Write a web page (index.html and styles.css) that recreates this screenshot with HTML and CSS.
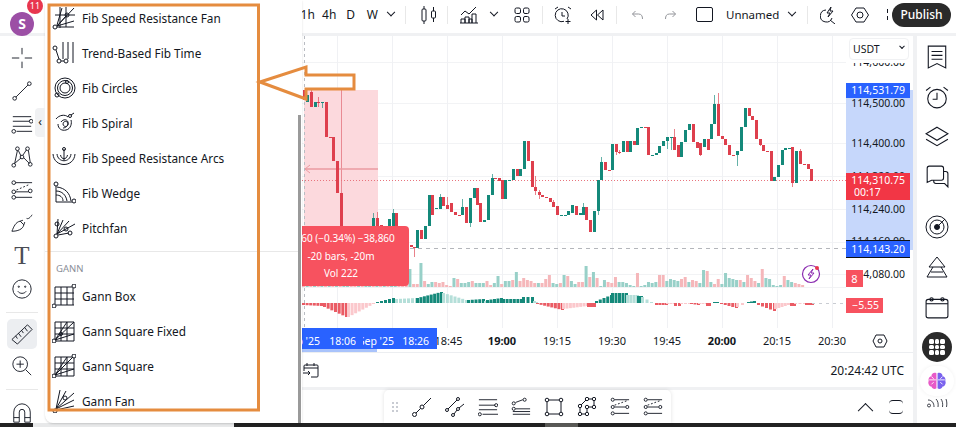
FILE: index.html
```html
<!DOCTYPE html>
<html lang="en">
<head>
    <meta charset="UTF-8">
    <meta name="viewport" content="width=device-width, initial-scale=1.0">
    <title>Unnamed - Chart</title>
    <link rel="stylesheet" href="styles.css">
</head>
<body>
    <svg class="sprites" xmlns="http://www.w3.org/2000/svg">
        <symbol id="i-cross" viewBox="0 0 24 24"><path d="M1 12h8M15 12h8M12 1v7M12 16v7"/></symbol>
        <symbol id="i-line" viewBox="0 0 24 24"><circle cx="4" cy="20" r="2"/><circle cx="20" cy="4" r="2"/><path d="M5.5 18.5l13-13"/></symbol>
        <symbol id="i-fib" viewBox="0 0 24 24"><path d="M2 4h20M2 9h18M6 20h17M2 14.500h20"/><circle cx="22" cy="9" r="2"/><circle cx="3" cy="20" r="2"/></symbol>
        <symbol id="i-pattern" viewBox="0 0 24 24"><circle cx="3" cy="21" r="2"/><circle cx="7" cy="3" r="2"/><circle cx="12" cy="12" r="2"/><circle cx="18" cy="3" r="2"/><circle cx="21" cy="20" r="2"/><path d="M4 19L7 5M4 19l7-6M8 5l3 6M13 10l4-6M19 5l2 13M14 13l6 6"/></symbol>
        <symbol id="i-forecast" viewBox="0 0 24 24"><circle cx="3" cy="4" r="2"/><circle cx="3" cy="14" r="2"/><circle cx="3" cy="20" r="2"/><circle cx="21" cy="13" r="2"/><path d="M5 4h18M5 20h18M5 14h14"/><path stroke-dasharray="2 2" d="M6 12l14-6"/></symbol>
        <symbol id="i-brush" viewBox="0 0 24 24"><path d="M1 21c2-5 4-10 9-11l4 4c-1 5-7 7-13 7zM10 10l3-1M14 14l1-3M17 7c2 1 4-1 6-4"/></symbol>
        <symbol id="i-smile" viewBox="0 0 24 24"><circle cx="12" cy="12" r="10"/><circle cx="8.500" cy="9.500" r=".7"/><circle cx="15.500" cy="9.500" r=".7"/><path d="M7.500 14.500c2 3 7 3 9 0"/></symbol>
        <symbol id="i-ruler" viewBox="0 0 24 24"><path d="M1 18L18 2l5 5L7 23zM5 14l2 3M8 11l3 4M11.500 8l2 3M15 5l3 4"/></symbol>
        <symbol id="i-zoom" viewBox="0 0 24 24"><circle cx="10" cy="10" r="8"/><path d="M10 6v8M6 10h8M16 16l6 6"/></symbol>
        <symbol id="i-magnet" viewBox="0 0 24 24"><path d="M3 22V11a9 9 0 0 1 18 0v11h-6V11a3 3 0 0 0-6 0v11zM3 17h6M15 17h6"/></symbol>

        <symbol id="m-fan" viewBox="0 0 24 24"><circle cx="3" cy="21" r="2"/><circle cx="15" cy="9" r="2"/><path d="M5 20L22 2M5 20l9-10M5 20l17-5M5 21h17M5 19L10 2M8 1v21M14 1v20M3 9h20"/></symbol>
        <symbol id="m-time" viewBox="0 0 24 24"><circle cx="3" cy="7" r="2"/><circle cx="7" cy="20" r="2"/><circle cx="14" cy="20" r="2"/><path d="M4 9l3 9M9 20h3M11 1v17M16 1v17M21 1v21"/></symbol>
        <symbol id="m-circles" viewBox="0 0 24 24"><circle cx="13" cy="12" r="10"/><circle cx="13" cy="12" r="7.500"/><circle cx="13" cy="12" r="5"/><circle cx="5" cy="19" r="2"/><circle cx="15" cy="6" r="1.500"/></symbol>
        <symbol id="m-spiral" viewBox="0 0 24 24"><path d="M4 8c3-4 9-5 12-2M6 13c0 5 4 7 8 6 5-1 6-7 5-10M11 13a2.500 2.500 0 1 0 0-.1M9 11c2-3 6-3 7 0 1 4-3 6-5 6"/><circle cx="18" cy="5" r="1.500"/><path d="M19 4l3-2"/></symbol>
        <symbol id="m-arcs" viewBox="0 0 24 24"><path d="M1 8c1 14 21 14 22 0M5 8c1 9 13 9 14 0M8.500 9c1 5 6 5 7 0M12 3v11"/><circle cx="12" cy="3" r="1.500"/></symbol>
        <symbol id="m-wedge" viewBox="0 0 24 24"><circle cx="4" cy="3" r="2"/><circle cx="22" cy="20" r="2"/><path d="M4 5v16h16M5 6c8 1 13 6 14 14M4 10c6 0 10 4 11 10M4 14c4 0 7 2 7 6"/></symbol>
        <symbol id="m-pitch" viewBox="0 0 24 24"><circle cx="4" cy="20" r="2"/><circle cx="5" cy="8" r="2"/><circle cx="14" cy="13" r="2"/><circle cx="18" cy="17" r="2"/><path d="M5 18l1-15M5 18l6-14M5 18L17 5M5 18L23 8M6 19l11-2"/></symbol>
        <symbol id="m-box" viewBox="0 0 24 24"><circle cx="2" cy="22" r="2"/><circle cx="22" cy="2" r="2"/><path d="M3 3h17M3 9h19M3 15h19M4 21h18M3 3v17M9 3v18M15 3v18M21 4v17"/></symbol>
        <symbol id="m-square" viewBox="0 0 24 24"><circle cx="2" cy="22" r="2"/><circle cx="9" cy="15" r="1.500"/><path d="M3 3h19v19H4M3 3v17M3 9h19M3 15h19M9 3v19M15 3v19M3 21L22 3M3 21L15 3M3 21L22 15"/></symbol>
        <symbol id="m-square-dot" viewBox="0 0 24 24"><circle cx="2" cy="22" r="2"/><circle cx="22" cy="2" r="2"/><path d="M3 3h17M22 4v18H4M3 3v17M3 9h19M3 15h19M9 3v19M15 3v19M3 21L21 3M3 21L15 3M3 21L22 15"/></symbol>
        <symbol id="m-gannfan" viewBox="0 0 24 24"><circle cx="3" cy="22" r="2"/><circle cx="13" cy="9" r="2"/><path d="M4 20L8 1M4 20L14 2M4 20L22 4M4 20l18-9M4 21l18-4"/></symbol>

        <symbol id="t-candles" viewBox="0 0 16 18"><rect x="1" y="3" width="4" height="12" rx="1"/><rect x="10.500" y="5" width="4" height="7" rx="1"/><path d="M3 0v3M3 15v3M12.500 1v4M12.500 12v4"/></symbol>
        <symbol id="t-indicator" viewBox="0 0 18 18"><path d="M1 9l4-4 4 3 7-7M1 17v-4h4v4M5 17v-6h4v6M9 17v-4h3v4M12 17V8h4v9M0 17h18"/></symbol>
        <symbol id="t-layout" viewBox="0 0 16 16"><rect x="1" y="1" width="5.500" height="5.500" rx="1.500"/><rect x="9.500" y="1" width="5.500" height="5.500" rx="1.500"/><rect x="1" y="9.500" width="5.500" height="5.500" rx="1.500"/><rect x="9.500" y="9.500" width="5.500" height="5.500" rx="1.500"/></symbol>
        <symbol id="t-alarm" viewBox="0 0 18 18"><path d="M13 13a6.500 6.500 0 1 0-3 2.300M8 6v4h3M1 3l3-2M17 3l-3-2M14 13v5M11.500 15.500h5"/></symbol>
        <symbol id="t-rewind" viewBox="0 0 14 12"><path d="M6.500 1L1 6l5.500 5zM13 1L7.500 6l5.500 5z"/></symbol>
        <symbol id="t-undo" viewBox="0 0 12 10"><path d="M4 1L1 4l3 3M1 4h6c3 0 4 2 4 5"/></symbol>
        <symbol id="t-redo" viewBox="0 0 12 10"><path d="M8 1l3 3-3 3M11 4H5C2 4 1 6 1 9"/></symbol>
        <symbol id="t-search" viewBox="0 0 16 18"><path d="M6 4a6 6 0 1 0 6 8M10 14l5 4M11 1L7 7h3L8 11l5-6h-3z"/></symbol>
        <symbol id="t-hex" viewBox="0 0 18 16"><path d="M5 1h8l4.500 7-4.500 7H5L.5 8z"/><circle cx="9" cy="8" r="3"/></symbol>

        <symbol id="r-list" viewBox="0 0 20 22"><path d="M2 1h16v20l-8-4-8 4zM5 6h10M5 9.500h10M5 13h10"/></symbol>
        <symbol id="r-alarm" viewBox="0 0 22 22"><circle cx="11" cy="12.500" r="8.500"/><path d="M11 7v6H7M1 5l4-3M21 5l-4-3"/></symbol>
        <symbol id="r-layers" viewBox="0 0 22 20"><path d="M11 1l10 6-10 6L1 7zM1 12l10 6 10-6"/></symbol>
        <symbol id="r-chat" viewBox="0 0 22 22"><path d="M4 1h11a2 2 0 0 1 2 2v9a2 2 0 0 1-2 2H6l-4 2V3a2 2 0 0 1 2-2zM17 6h2a2 2 0 0 1 2 2v12l-3-3H10a2 2 0 0 1-2-2v-1"/></symbol>
        <symbol id="r-target" viewBox="0 0 24 24"><circle cx="12" cy="12" r="11"/><circle cx="12" cy="12" r="7"/><circle cx="12" cy="12" r="2.500" fill="#131722"/><path d="M12 12l8-8"/></symbol>
        <symbol id="r-peaks" viewBox="0 0 24 22"><path d="M12 1l8 10H4zM8 11l-6 10h20l-6-10M6 16h12"/></symbol>
        <symbol id="r-calendar" viewBox="0 0 22 22"><rect x="1" y="4" width="20" height="17" rx="2"/><path d="M1 8h20"/><circle cx="6" cy="4" r="1.500"/><circle cx="16" cy="4" r="1.500"/></symbol>

        <symbol id="d-ray" viewBox="0 0 20 20"><circle cx="2.500" cy="17.500" r="2"/><circle cx="10" cy="10" r="2"/><path d="M4 16l4.500-4.500M11.500 8.500L19 1"/></symbol>
        <symbol id="d-parallel" viewBox="0 0 20 20"><circle cx="2" cy="13" r="1.500"/><circle cx="13" cy="2" r="1.500"/><circle cx="8" cy="18" r="1.500"/><circle cx="13" cy="12" r="1.500"/><path d="M3 12l9-9M9 17l3-4M14 11l5-4"/></symbol>
        <symbol id="d-levels" viewBox="0 0 22 20"><path d="M1 2h20M1 8h18M5 18h17M1 13h20" /><circle cx="20" cy="8" r="1.700"/><circle cx="2" cy="18" r="1.700"/></symbol>
        <symbol id="d-fan" viewBox="0 0 22 20"><circle cx="3" cy="6" r="1.700"/><circle cx="3" cy="12" r="1.700"/><circle cx="15" cy="2" r="1.700"/><path d="M5 5l8-3M5 12h16M2 15h19M2 18h19"/></symbol>
        <symbol id="d-rect" viewBox="0 0 20 20"><circle cx="3" cy="3" r="1.800"/><circle cx="17" cy="3" r="1.800"/><circle cx="3" cy="17" r="1.800"/><circle cx="17" cy="17" r="1.800"/><path d="M5 3h10M5 17h10M3 5v10M17 5v10"/></symbol>
        <symbol id="d-path" viewBox="0 0 20 20"><circle cx="3" cy="9" r="1.700"/><circle cx="3" cy="17" r="1.700"/><circle cx="10" cy="2" r="1.700"/><circle cx="17" cy="2" r="1.700"/><circle cx="10" cy="10" r="1.700"/><circle cx="17" cy="10" r="1.700"/><circle cx="10" cy="17" r="1.700"/><path d="M4 8l5-5M12 2h3M12 10h3M17 4v4M10 12v3M5 17h3M3 11v4"/></symbol>
        <symbol id="d-forecast" viewBox="0 0 22 20"><circle cx="3" cy="2" r="1.700"/><circle cx="3" cy="10" r="1.700"/><circle cx="3" cy="17" r="1.700"/><circle cx="19" cy="10" r="1.700"/><path d="M5 2h16M5 17h16M5 10h12"/><path stroke-dasharray="2 2" d="M5 8l14-5"/></symbol>
    </svg>

    <header class="topbar">
        <div class="avatar">S<span class="avatar-badge">11</span></div>
        <div class="toolbar">
            <span class="tf">1h</span>
            <span class="tf">4h</span>
            <span class="tf">D</span>
            <span class="tf">W</span>
            <span class="chev chev-tf"></span>
            <span class="tool-sep sep-a"></span>
            <svg class="ico ico-candles"><use href="#t-candles"/></svg>
            <span class="tool-sep sep-b"></span>
            <svg class="ico ico-ind"><use href="#t-indicator"/></svg>
            <span class="chev chev-ind"></span>
            <svg class="ico ico-layout"><use href="#t-layout"/></svg>
            <span class="tool-sep sep-c"></span>
            <svg class="ico ico-alarm"><use href="#t-alarm"/></svg>
            <svg class="ico ico-rewind"><use href="#t-rewind"/></svg>
            <span class="tool-sep sep-d"></span>
            <svg class="ico ico-undo"><use href="#t-undo"/></svg>
            <svg class="ico ico-redo"><use href="#t-redo"/></svg>
            <span class="layout-box"></span>
            <span class="layout-name">Unnamed</span>
            <span class="chev chev-name"></span>
            <span class="tool-sep sep-e"></span>
            <svg class="ico ico-search"><use href="#t-search"/></svg>
            <svg class="ico ico-hex"><use href="#t-hex"/></svg>
            <span class="kebab"></span>
            <button class="publish">Publish</button>
        </div>
    </header>

    <main class="workspace">
        <nav class="leftbar">
            <div class="rail-btn"><svg class="ico-22"><use href="#i-cross"/></svg></div>
            <div class="rail-btn"><svg class="ico-22"><use href="#i-line"/></svg></div>
            <div class="rail-btn"><svg class="ico-22"><use href="#i-fib"/></svg></div>
            <div class="rail-btn"><svg class="ico-22"><use href="#i-pattern"/></svg></div>
            <div class="rail-btn"><svg class="ico-22"><use href="#i-forecast"/></svg></div>
            <div class="rail-btn"><svg class="ico-22"><use href="#i-brush"/></svg></div>
            <div class="rail-btn rail-text">T</div>
            <div class="rail-btn"><svg class="ico-22"><use href="#i-smile"/></svg></div>
            <div class="rail-sep"></div>
            <div class="rail-btn rail-active"><svg class="ico-22"><use href="#i-ruler"/></svg></div>
            <div class="rail-btn"><svg class="ico-22"><use href="#i-zoom"/></svg></div>
            <div class="rail-sep"></div>
            <div class="rail-btn"><svg class="ico-22"><use href="#i-magnet"/></svg></div>
        </nav>

        <section class="center">
            <div class="chart-card">
                <svg id="chart" class="chart" viewBox="45 36 868 316" xmlns="http://www.w3.org/2000/svg"></svg>
                <div class="currency">USDT<span class="chev chev-small"></span></div>
            </div>
            <div class="date-row">
                <svg class="ico-cal" viewBox="0 0 16 16"><path d="M4 3h10a1 1 0 0 1 1 1v10a1 1 0 0 1-1 1H8M1 9V4a1 1 0 0 1 1-1h2M4 1v3M11 1v3M1 6h14M0 11h7M5 9l2 2-2 2"/></svg>
                <span class="clock">20:24:42 UTC</span>
            </div>
            <div class="drawbar">
                <div class="draw-card">
                    <span class="grip"></span>
                    <svg class="draw-ico"><use href="#d-ray"/></svg>
                    <svg class="draw-ico"><use href="#d-parallel"/></svg>
                    <svg class="draw-ico"><use href="#d-levels"/></svg>
                    <svg class="draw-ico"><use href="#d-fan"/></svg>
                    <svg class="draw-ico"><use href="#d-rect"/></svg>
                    <svg class="draw-ico"><use href="#d-path"/></svg>
                    <svg class="draw-ico"><use href="#d-forecast"/></svg>
                    <svg class="draw-ico"><use href="#d-forecast"/></svg>
                </div>
                <span class="chev chev-up"></span>
                <span class="frame-btn"></span>
            </div>
        </section>

        <aside class="rightbar">
            <div class="side-btn"><svg class="ico-side"><use href="#r-list"/></svg></div>
            <div class="side-btn"><svg class="ico-side"><use href="#r-alarm"/></svg></div>
            <div class="side-btn"><svg class="ico-side"><use href="#r-layers"/></svg></div>
            <div class="side-btn"><svg class="ico-side"><use href="#r-chat"/></svg></div>
            <div class="side-btn side-gap"><svg class="ico-side"><use href="#r-target"/></svg></div>
            <div class="side-btn"><svg class="ico-side"><use href="#r-peaks"/></svg></div>
            <div class="side-btn"><svg class="ico-side"><use href="#r-calendar"/></svg></div>
            <div class="apps"><span></span><span></span><span></span><span></span><span></span><span></span><span></span><span></span><span></span></div>
            <div class="brain-pill">
                <svg viewBox="0 0 18 18" class="brain">
                    <path fill="#e85ac8" d="M8.500 2C6 1 4 2.500 4 4.500 2 5 1 7 1.500 9 .5 11 2 14 4 14c.5 2 3 3 4.500 1.500z"/>
                    <path fill="#7a62ee" d="M9.500 2c2.500-1 4.500.5 4.500 2.500 2 .5 3 2.500 2.500 4.500 1 2-.5 5-2.500 5-.5 2-3 3-4.500 1.500z"/>
                    <path fill="none" stroke="#fff" stroke-width=".8" d="M2 8h6M4 5l2 2M4 12l2-2M10 8h6M14 5l-2 2M14 12l-2-2"/>
                </svg>
            </div>
            <svg class="signal" viewBox="0 0 22 10"><circle cx="3" cy="7.500" r="1.500"/><path d="M2 2c4 0 6 3 6 7M10 1c2 2 2.500 5 2 8M15 1c1.500 2 2 5 1.500 8M20 1c1 3 1 5 .5 8"/></svg>
        </aside>
    </main>

    <div class="taskbar"><span class="task-light"></span><span class="task-grey"></span></div>

    <!-- drawing tools flyout, lies over the chart -->
    <div class="flyout">
        <div class="fly-row"><svg class="fly-ico"><use href="#m-fan"/></svg>Fib Speed Resistance Fan</div>
        <div class="fly-row"><svg class="fly-ico"><use href="#m-time"/></svg>Trend-Based Fib Time</div>
        <div class="fly-row"><svg class="fly-ico"><use href="#m-circles"/></svg>Fib Circles</div>
        <div class="fly-row"><svg class="fly-ico"><use href="#m-spiral"/></svg>Fib Spiral</div>
        <div class="fly-row"><svg class="fly-ico"><use href="#m-arcs"/></svg>Fib Speed Resistance Arcs</div>
        <div class="fly-row"><svg class="fly-ico"><use href="#m-wedge"/></svg>Fib Wedge</div>
        <div class="fly-row"><svg class="fly-ico"><use href="#m-pitch"/></svg>Pitchfan</div>
        <div class="fly-sep"></div>
        <div class="fly-head">GANN</div>
        <div class="fly-row"><svg class="fly-ico"><use href="#m-box"/></svg>Gann Box</div>
        <div class="fly-row"><svg class="fly-ico"><use href="#m-square"/></svg>Gann Square Fixed</div>
        <div class="fly-row"><svg class="fly-ico"><use href="#m-square-dot"/></svg>Gann Square</div>
        <div class="fly-row"><svg class="fly-ico"><use href="#m-gannfan"/></svg>Gann Fan</div>
        <span class="fly-scroll"></span>
    </div>
    <span class="collapse">‹</span>

    <!-- orange annotation drawn on top of the screenshot -->
    <svg class="annotation" viewBox="0 0 956 427" xmlns="http://www.w3.org/2000/svg">
        <rect x="49" y="5" width="209.500" height="405"/>
        <path d="M260 82L306 67V75H354V89H306V99Z"/>
    </svg>

    <script src="chart.js"></script>
</body>
</html>
```

FILE: styles.css
```css
* {
    margin: 0;
    padding: 0;
    box-sizing: border-box;
}

html, body {
    height: 100%;
}

body {
    width: 956px;
    height: 427px;
    display: flex;
    flex-direction: column;
    position: relative;
    overflow: hidden;
    background: #f0f1f3;
    color: #131722;
    font-family: "Noto Sans", sans-serif;
}

svg use {
    fill: none;
    stroke: #131722;
    stroke-width: 1;
}

.sprites {
    display: none;
}

/* Top bar */
.topbar {
    height: 33px;
    flex: none;
    background: #fff;
    display: flex;
}

.avatar {
    width: 24px;
    height: 24px;
    margin: 12px 0 0 10px;
    border-radius: 50%;
    background: #9c4fa5;
    color: #fff;
    font-size: 14px;
    font-weight: 700;
    line-height: 24px;
    text-align: center;
    position: relative;
}

.avatar-badge {
    position: absolute;
    top: -14px;
    left: 17px;
    width: 16px;
    height: 16px;
    border-radius: 50%;
    background: #e8364f;
    font-size: 9px;
    font-weight: 400;
    line-height: 16px;
}

.toolbar {
    margin-left: 263px;
    flex: 1;
    height: 29px;
    display: flex;
    align-items: center;
}

.tf {
    width: 21.5px;
    flex: none;
    font-size: 12px;
    text-align: center;
}

.chev {
    width: 6px;
    height: 6px;
    border-right: 1px solid #131722;
    border-bottom: 1px solid #131722;
    transform: rotate(45deg) translate(-2px, -2px);
    flex: none;
}

.tool-sep {
    width: 1px;
    height: 18px;
    background: #e8e8e8;
    flex: none;
}

.ico {
    flex: none;
}

.chev-tf { margin-left: 5px; }
.sep-a { margin-left: 11px; }
.ico-candles { width: 16px; height: 18px; margin-left: 15px; }
.sep-b { margin-left: 10px; }
.ico-ind { width: 18px; height: 18px; margin-left: 12px; }
.chev-ind { margin-left: 13px; }
.ico-layout { width: 16px; height: 16px; margin-left: 17px; }
.sep-c { margin-left: 12px; }
.ico-alarm { width: 18px; height: 18px; margin-left: 11px; }
.ico-rewind { width: 14px; height: 12px; margin-left: 18px; }
.sep-d { margin-left: 12px; }
.ico-undo { width: 13px; height: 10px; margin-left: 14px; opacity: .45; }
.ico-redo { width: 13px; height: 10px; margin-left: 20px; opacity: .45; }

.layout-box {
    width: 17px;
    height: 15px;
    margin-left: 19px;
    border: 1px solid #131722;
    border-radius: 2px;
    flex: none;
}

.layout-name {
    font-size: 11.5px;
    margin-left: 13px;
    width: 52px;
    flex: none;
}

.chev-name { margin-left: 11px; }
.sep-e { margin-left: 12px; }
.ico-search { width: 16px; height: 18px; margin-left: 12px; }
.ico-hex { width: 18px; height: 16px; margin-left: 15px; }

.kebab {
    width: 1px;
    height: 12px;
    margin-left: 18px;
    flex: none;
    background: repeating-linear-gradient(#131722 0 4px, transparent 4px 7px);
}

.publish {
    width: 59px;
    height: 24px;
    margin-left: 4px;
    border: none;
    border-radius: 12px;
    background: #2a2a2a;
    color: #fff;
    font-family: inherit;
    font-size: 12px;
    font-weight: 500;
    flex: none;
}

/* Main area */
.workspace {
    flex: 1;
    min-height: 0;
    display: flex;
    padding-top: 3px;
}

.leftbar {
    width: 45px;
    flex: none;
    background: #fff;
    padding: 5px 1px 0 0;
    display: flex;
    flex-direction: column;
    align-items: center;
    overflow: hidden;
}

.rail-btn {
    width: 30px;
    height: 33px;
    flex: none;
    display: flex;
    align-items: center;
    justify-content: center;
}

.ico-22 {
    width: 22px;
    height: 22px;
}

.rail-text {
    font-family: "Liberation Serif", serif;
    font-size: 25px;
    font-weight: 400;
    color: #4a4d55;
}

.rail-sep {
    width: 32px;
    height: 1px;
    background: #e8e8e8;
    margin: 7px 0 6px;
    flex: none;
}

.rail-active {
    height: 30px;
    background: #eceef1;
    border-radius: 5px;
}

.center {
    width: 868px;
    flex: none;
    display: flex;
    flex-direction: column;
}

.chart-card {
    height: 316px;
    flex: none;
    background: #fff;
    position: relative;
}

.chart {
    display: block;
    width: 868px;
    height: 316px;
}

.currency {
    position: absolute;
    top: 2px;
    left: 804px;
    width: 60px;
    height: 22px;
    padding-left: 3px;
    background: #fff;
    border: 1px solid #f0f1f3;
    border-radius: 4px;
    font-size: 10.5px;
    line-height: 20px;
    display: flex;
    align-items: center;
    justify-content: space-between;
}

.chev-small {
    width: 4px;
    height: 4px;
    margin-right: 4px;
}

.date-row {
    height: 35px;
    flex: none;
    background: #fff;
    border-top: 1px solid #eceef1;
    display: flex;
    align-items: center;
    justify-content: space-between;
    padding: 0 9px 0 258px;
}

.ico-cal {
    width: 16px;
    height: 16px;
    fill: none;
    stroke: #131722;
    stroke-width: 1;
}

.clock {
    font-size: 12px;
}

.drawbar {
    height: 33px;
    margin-top: 3px;
    flex: none;
    background: #fff;
    display: flex;
    align-items: center;
    position: relative;
}

.draw-card {
    margin-left: 339px;
    width: 287px;
    height: 33px;
    border-radius: 5px 5px 0 0;
    box-shadow: 0 0 4px rgba(0, 0, 0, .12);
    display: flex;
    align-items: center;
    padding-left: 7px;
}

.grip {
    width: 7px;
    height: 11px;
    margin-right: 14px;
    background-image: radial-gradient(#c9ccd3 1px, transparent 1.2px);
    background-size: 4px 4px;
    flex: none;
}

.draw-ico {
    width: 20px;
    height: 20px;
    margin-right: 13px;
    flex: none;
}

.chev-up {
    margin-left: 189px;
    width: 11px;
    height: 11px;
    transform: rotate(225deg) translate(-3px, -3px);
}

.frame-btn {
    width: 14px;
    height: 14px;
    margin-left: 18px;
    border-radius: 4px;
    border-top: 1px solid #131722;
    border-bottom: 1px solid #131722;
}

.rightbar {
    width: 39px;
    margin-left: 4px;
    flex: none;
    background: #fff;
    padding: 1px 0 0 1px;
    display: flex;
    flex-direction: column;
    align-items: center;
    overflow: hidden;
}

.side-btn {
    width: 32px;
    height: 40px;
    flex: none;
    display: flex;
    align-items: center;
    justify-content: center;
}

.side-gap {
    margin-top: 10px;
}

.ico-side {
    width: 24px;
    height: 24px;
}

.apps {
    width: 30px;
    height: 30px;
    margin-top: 5px;
    border-radius: 50%;
    background: #2a2a2a;
    padding: 7px;
    display: grid;
    grid-template-columns: repeat(3, 1fr);
    gap: 1px;
    flex: none;
}

.apps span {
    background: #fff;
    border-radius: 1.5px;
}

.brain-pill {
    width: 34px;
    height: 30px;
    margin: 4px 0 0;
    border-radius: 15px;
    background: #fff;
    box-shadow: 0 0 4px rgba(0, 0, 0, .06);
    display: flex;
    align-items: center;
    justify-content: center;
    flex: none;
}

.brain {
    width: 20px;
    height: 20px;
}

.signal {
    width: 22px;
    height: 10px;
    margin-top: 2px;
    flex: none;
    fill: none;
    stroke: #131722;
    stroke-width: .8;
}

.taskbar {
    height: 4px;
    flex: none;
    background: #222;
    padding-left: 33px;
    display: flex;
}

.task-light {
    width: 201px;
    height: 4px;
    background: #e8e9ea;
}

.task-grey {
    width: 33px;
    height: 4px;
    margin-left: 311px;
    background: #5b5b58;
}

/* Flyout menu */
.flyout {
    position: absolute;
    top: 0;
    left: 45px;
    width: 257px;
    height: 423px;
    background: #fff;
    border-radius: 0 0 0 8px;
    overflow: hidden;
    box-shadow: 0 1px 2px rgba(0, 0, 0, .15);
}

.fly-row {
    height: 35px;
    padding-left: 7px;
    display: flex;
    align-items: center;
    gap: 6px;
    font-size: 11.8px;
    white-space: nowrap;
}

.fly-ico {
    width: 24px;
    height: 24px;
    flex: none;
}

.fly-sep {
    height: 1px;
    margin: 6px 4px 0 0;
    background: #e8e8e8;
}

.fly-head {
    height: 26px;
    padding: 10px 0 0 11px;
    font-size: 9.5px;
    line-height: 13px;
    color: #8a8e97;
}

.fly-scroll {
    position: absolute;
    top: 115px;
    right: 1px;
    bottom: 0;
    width: 3px;
    background: #9a9a9a;
}

.collapse {
    position: absolute;
    top: 108px;
    left: 35px;
    width: 10px;
    height: 29px;
    background: #f0f1f3;
    border-radius: 4px 0 0 4px;
    font-size: 12px;
    line-height: 28px;
    text-align: center;
}

.annotation {
    position: absolute;
    top: 0;
    left: 0;
    width: 956px;
    height: 427px;
    fill: none;
    stroke: #e58c3f;
    stroke-width: 3;
    pointer-events: none;
}
```

FILE: chart.js
```js
const svg = document.getElementById('chart');
const NS = 'http://www.w3.org/2000/svg';
const GREEN = '#14897a';
const RED = '#de3f4d';

function add(tag, attrs, text) {
    const el = document.createElementNS(NS, tag);
    for (const key in attrs) el.setAttribute(key, attrs[key]);
    if (text) el.textContent = text;
    svg.appendChild(el);
    return el;
}

function line(x1, y1, x2, y2, stroke, extra) {
    add('line', { x1, y1, x2, y2, stroke, 'stroke-width': 1, ...extra });
}

function label(x, y, text, fill, extra) {
    add('text', { x, y, fill, 'font-size': 11, 'font-family': 'Noto Sans, sans-serif', 'text-anchor': 'middle', ...extra }, text);
}

// Grid
[62.5, 103.5, 143.5, 176.5, 209.5, 242.5, 274.5, 287.5].forEach(y => line(302, y, 846, y, '#f2f3f5'));
[337.5, 392.5, 447.5, 502.5, 557.5, 612.5, 667.5, 722.5, 777.5, 832.5].forEach(x => line(x, 36, x, 328, '#f0f1f4'));

// Measure range
add('rect', { x: 304, y: 90, width: 74, height: 136, fill: '#fcd9dd' });
line(341.5, 90, 341.5, 226, '#e98a93');
line(305, 169, 378, 169, '#eb9aa1', { 'stroke-width': 1.5 });
add('path', { d: 'M310 165L305 169L310 173', fill: 'none', stroke: '#eb9aa1' });
line(304.5, 36, 304.5, 328, '#b9bcc2', { 'stroke-dasharray': '3 3' });

// Price lines and axis highlight
add('rect', { x: 846, y: 90, width: 67, height: 160, fill: '#c6d7fb' });
line(302, 180.5, 846, 180.5, '#e8747d', { 'stroke-dasharray': '1 2' });
line(410, 248.5, 846, 248.5, '#b4b6bb', { 'stroke-dasharray': '4 4' });

// Candles: x, top, bottom, colour, optional wick top and bottom
const candles = [
    [304, 90, 100, 'r'], [307, 95, 102, 'g'], [311, 92, 107, 'r', 90, 107], [315, 102, 107, 'g'], [318, 102, 103, 'r', 97, 107],
    [322, 102, 103, 'g', 102, 108], [326, 102, 137, 'r'], [330, 137, 138, 'r'], [333, 137, 161, 'r'], [337, 161, 193, 'r'], [341, 193, 240, 'r'],
    [373, 218, 230, 'g', 213, 230], [377, 218, 230, 'r', 212, 230], [381, 225, 230, 'r'], [389, 219, 230, 'g'], [393, 213, 230, 'g', 209, 230], [396, 213, 230, 'r'],
    [411, 245, 247, 'r'], [414, 247, 248, 'r', 247, 257], [417, 230, 248, 'g'], [421, 230, 239, 'r'], [425, 226, 239, 'g'], [429, 195, 226, 'g'],
    [432, 195, 215, 'r'], [436, 208, 209, 'g'], [440, 197, 209, 'g', 194, 209], [443, 197, 206, 'r'], [447, 205, 209, 'r', 197, 209], [451, 203, 212, 'r'],
    [455, 212, 215, 'r'], [459, 215, 216, 'r'], [462, 207, 215, 'g', 199, 215], [466, 207, 223, 'r'], [470, 198, 223, 'g', 198, 227], [474, 188, 198, 'g'],
    [477, 188, 205, 'r'], [480, 203, 222, 'r'], [484, 220, 222, 'g'], [488, 195, 220, 'g'], [492, 178, 195, 'g', 174, 195], [495, 178, 179, 'r'],
    [499, 178, 181, 'r'], [502, 180, 199, 'r'], [505, 180, 199, 'g'], [509, 180, 181, 'g'], [513, 169, 180, 'g'], [517, 169, 176, 'r'], [520, 169, 176, 'g'],
    [524, 141, 169, 'g'], [528, 141, 161, 'r'], [532, 161, 187, 'r'], [535, 187, 191, 'r', 176, 195], [539, 192, 195, 'r', 190, 199], [542, 195, 197, 'r'],
    [546, 197, 198, 'r'], [550, 198, 202, 'r'], [553, 202, 207, 'r', 200, 207], [557, 206, 215, 'r'], [561, 215, 216, 'g'], [565, 215, 216, 'g'],
    [568, 211, 215, 'g'], [572, 205, 213, 'g'], [576, 206, 215, 'r'], [580, 213, 215, 'g'], [583, 207, 215, 'g', 203, 215], [586, 207, 220, 'r'],
    [590, 220, 232, 'r'], [594, 211, 232, 'g'], [598, 180, 211, 'g', 180, 215], [601, 162, 180, 'g', 157, 180], [605, 162, 170, 'r'], [609, 170, 171, 'r'],
    [612, 144, 170, 'g'], [616, 144, 152, 'r', 144, 155], [619, 152, 153, 'r', 150, 154], [623, 141, 152, 'g'], [627, 141, 152, 'r'], [630, 141, 152, 'g'],
    [634, 141, 145, 'r'], [637, 128, 145, 'g'], [641, 127, 128, 'g'], [645, 127, 128, 'r'], [648, 127, 155, 'r'], [652, 155, 156, 'g'], [656, 153, 155, 'g'],
    [659, 146, 153, 'g'], [663, 141, 146, 'g'], [667, 137, 141, 'g', 137, 149], [671, 137, 138, 'g', 137, 150], [674, 137, 150, 'r', 129, 150], [678, 145, 157, 'r'],
    [681, 142, 157, 'g'], [685, 130, 142, 'g'], [689, 124, 130, 'g'], [693, 124, 142, 'r'], [697, 142, 148, 'r'], [700, 143, 155, 'r', 143, 156], [704, 139, 147, 'g'],
    [708, 139, 150, 'r'], [711, 124, 139, 'g'], [714, 104, 124, 'g', 95, 124], [718, 104, 136, 'r', 93, 136], [722, 136, 139, 'r'], [725, 139, 145, 'r'],
    [729, 145, 155, 'r'], [733, 155, 156, 'r'], [737, 151, 155, 'g', 151, 166], [741, 127, 151, 'g'], [745, 108, 127, 'g'], [749, 108, 116, 'r'], [752, 116, 120, 'r'],
    [756, 120, 139, 'r'], [760, 139, 145, 'r', 139, 146], [763, 145, 151, 'r'], [767, 151, 152, 'r'], [771, 151, 181, 'r'], [774, 177, 181, 'g'], [778, 165, 177, 'g'],
    [782, 150, 165, 'g'], [785, 148, 150, 'g'], [789, 148, 149, 'g'], [792, 147, 183, 'r', 147, 187], [796, 151, 183, 'g'], [800, 151, 164, 'r', 149, 164],
    [804, 164, 165, 'r'], [808, 164, 169, 'r'], [811, 169, 181, 'r']
];

candles.forEach(([x, top, bottom, c, wickTop, wickBottom]) => {
    const color = c === 'g' ? GREEN : RED;
    if (wickTop !== undefined) line(x + .5, wickTop, x + .5, wickBottom, color, { opacity: .65 });
    add('rect', { x: x - 1, y: top, width: 3, height: bottom - top, fill: color });
});

// Volume: positive is a green bar, negative a red one
const volume = [
    -3, 5, -3, 4, -6, 2, -5, 6, -4, 3, -7, 4, 5, -3, -6, 8, -4, 3, 2, -5, 4, -3, 6, -2, 3, 5, -4, -2,
    -9, 18, -3, -3, 24, -6, 3, 5, -5, -4, -5, -2, -1, 9, -8, 4, 4, 5, -6, 4, 4, 4, -6, -2, 4, 11, -3,
    6, 6, -7, 15, -6, -9, -7, -6, -4, 4, -4, -8, -12, 4, 3, -4, 12, -11, 6, 3, -5, -5, 21, -10, 15, -9,
    1, 7, -5, -4, -10, 5, 5, 4, 2, 1, -14, 1, 2, 5, 4, 5, -12, -12, 6, 8, 7, 6, -8, -10, 5, -7, -6, 4,
    17, -16, 5, -3, -8, 3, 14, 9, 8, 7, -7, 5, -12, -9, -6, 4, -18, 9, 8, 2, 1, 2, -11, 7, 5, -4, -3, -2
];

volume.forEach((v, i) => {
    const h = Math.abs(v);
    add('rect', { x: 302 + i * 3.67, y: 287 - h, width: 3, height: h, fill: v > 0 ? '#98d0c8' : '#f5b7ba' });
});

// MACD histogram segments: first x, last x, start value, end value, tone
const macd = [
    [302, 320, -2, -3, 'rd'], [323, 345, -4, -14, 'rd'], [347, 372, -14, -1, 'rl'], [376, 392, 1, 5, 'gd'], [395, 415, 4, 5, 'gl'],
    [416, 440, 5, 11, 'gd'], [442, 465, 10, 3, 'gl'], [467, 482, 3, 4, 'gd'], [484, 494, 2, 1, 'gl'], [486, 500, 3, 5, 'gd'], [502, 520, 4, 4, 'gd'],
    [522, 531, 6, 6, 'gd'], [533, 535, 2, 1, 'gl'], [536, 561, -1, -7, 'rd'], [562, 586, -6, -3, 'rl'], [587, 593, -4, -4, 'rd'], [595, 610, 2, 8, 'gd'],
    [611, 625, 10, 10, 'gd'], [626, 636, 8, 8, 'gl'], [637, 640, 7, 7, 'gd'], [641, 650, 6, 1, 'gl'], [655, 665, -2, -2, 'rd'], [666, 673, -1, -1, 'rl'],
    [674, 678, -3, -3, 'rd'], [680, 688, -1, -1, 'rl'], [690, 697, -1, -2, 'rd'], [698, 705, -1, -1, 'rl'], [706, 708, -3, -3, 'rd'], [713, 716, 1, 1, 'gd'],
    [720, 735, -1, -5, 'rd'], [736, 741, -4, -2, 'rl'], [747, 753, 1, 2, 'gd'], [757, 773, -2, -8, 'rd'], [774, 787, -6, -2, 'rl'], [790, 793, -3, -3, 'rd'],
    [794, 803, -1, -1, 'rl'], [805, 811, -2, -2, 'rd']
];
const tones = { rd: '#ea5b64', rl: '#fbc8cc', gd: '#14897a', gl: '#b5dfd9' };

macd.forEach(([from, to, a, b, tone]) => {
    const n = Math.max(1, Math.round((to - from) / 3.67));
    for (let i = 0; i <= n; i++) {
        const v = a + (b - a) * i / n;
        const h = Math.max(1, Math.abs(v));
        add('rect', { x: from + i * (to - from) / n, y: v > 0 ? 303 - h : 303, width: 3, height: h, fill: tones[tone] });
    }
});
line(812, 303.5, 846, 303.5, '#c9ccd2', { 'stroke-dasharray': '3 4' });

// Measure tooltip
const tip = { 'font-size': 10 };
add('rect', { x: 273, y: 226, width: 136, height: 60, rx: 4, fill: '#f7525f' });
label(341, 242, '−5.60 (−0.34%) −38,860', '#fff', tip);
label(341, 260, '-20 bars, -20m', '#fff', tip);
label(341, 277, 'Vol 222', '#fff', tip);

// Price axis
const axis = { 'text-anchor': 'end', 'font-size': 10.5 };
[[107, '114,500.00'], [147, '114,400.00'], [180, '114,320.00'], [213, '114,240.00'], [245, '114,160.00'], [278, '114,080.00'], [66, '114,600.00']]
    .forEach(([y, t]) => label(905, y, t, '#131722', axis));
add('rect', { x: 849, y: 38, width: 60, height: 25, fill: '#fff' });

add('rect', { x: 846, y: 83, width: 64, height: 15, fill: '#2962ff' });
label(905, 94, '114,531.79', '#fff', axis);
add('rect', { x: 846, y: 173, width: 64, height: 27, fill: '#f23645' });
label(905, 184, '114,310.75', '#fff', axis);
label(854, 196, '00:17', '#fff', { 'text-anchor': 'start', 'font-size': 10.5 });
add('rect', { x: 846, y: 241, width: 64, height: 17, fill: '#2962ff' });
line(846, 240.5, 910, 240.5, '#111');
line(846, 257.5, 910, 257.5, '#111');
label(905, 253, '114,143.20', '#fff', axis);
add('rect', { x: 846, y: 270, width: 17, height: 17, fill: '#f7525f' });
label(854.5, 283, '8', '#fff');
add('rect', { x: 846, y: 298, width: 37, height: 15, fill: '#f7525f' });
label(879, 309, '−5.55', '#fff', { 'text-anchor': 'end', 'font-size': 10.5 });

// Events badge on the chart
add('circle', { cx: 811, cy: 274, r: 8.5, fill: '#fff', stroke: '#8a2bb0', 'stroke-width': 1.2 });
add('path', { d: 'M813 269L808 275H811L809 279L814 273H811Z', fill: 'none', stroke: '#8a2bb0' });
add('circle', { cx: 817, cy: 268, r: 2, fill: '#e8364f' });

// Time axis
add('rect', { x: 302, y: 328, width: 135, height: 21, fill: '#2962ff' });
add('rect', { x: 302, y: 349, width: 75, height: 3, fill: '#a9c3fb' });
const end = { 'text-anchor': 'end', 'font-size': 10.5 };
label(320, 345, "Sep '25", '#fff', end);
label(356, 345, '18:06', '#fff', end);
label(394, 345, "Sep '25", '#fff', end);
add('rect', { x: 356, y: 332, width: 7, height: 15, fill: '#2962ff' });
label(429, 345, '18:26', '#fff', end);
label(448.5, 345, '18:45', '#131722');
add('rect', { x: 430, y: 332, width: 7, height: 15, fill: '#2962ff' });
const times = [[502, '19:00', 1], [557, '19:15'], [612, '19:30'], [667, '19:45'], [722, '20:00', 1], [777, '20:15'], [832, '20:30']];
times.forEach(([x, t, bold]) => label(x, 345, t, '#131722', bold ? { 'font-weight': 700 } : {}));

// Settings button at the axis corner
add('path', { d: 'M876 335h8l3 6-3 6h-8l-3-6z', fill: 'none', stroke: '#131722' });
add('circle', { cx: 880, cy: 341, r: 2, fill: 'none', stroke: '#131722' });
```
